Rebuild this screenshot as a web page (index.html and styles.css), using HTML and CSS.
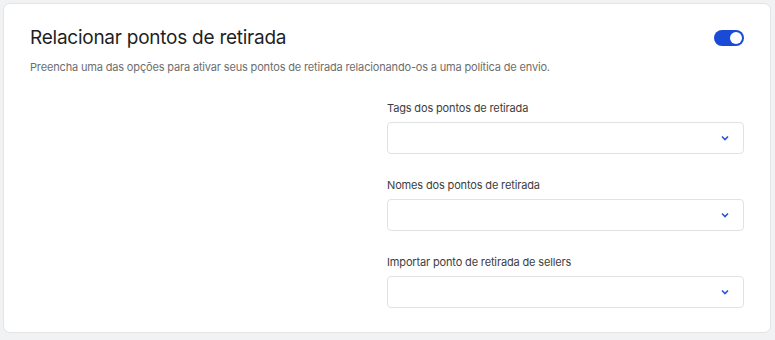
FILE: index.html
```html
<!DOCTYPE html>
<html lang="pt-BR">
<head>
<meta charset="utf-8">
<link rel="stylesheet" href="styles.css">
</head>
<body>
<section class="card">
  <header class="card-head">
    <h1 class="title">Relacionar pontos de retirada</h1>
    <button class="toggle" aria-pressed="true"><span class="knob"></span></button>
  </header>
  <p class="subtitle">Preencha uma das opções para ativar seus pontos de retirada relacionando-os a uma política de envio.</p>
  <div class="grid">
    <div></div>
    <div class="fields">
      <div class="field">
        <label class="label">Tags dos pontos de retirada</label>
        <div class="select"><svg class="chev" width="8" height="6" viewBox="0 0 8 6"><path d="M1 1.5 L4 4.5 L7 1.5" fill="none" stroke="#2953da" stroke-width="1.6"/></svg></div>
      </div>
      <div class="field">
        <label class="label">Nomes dos pontos de retirada</label>
        <div class="select"><svg class="chev" width="8" height="6" viewBox="0 0 8 6"><path d="M1 1.5 L4 4.5 L7 1.5" fill="none" stroke="#2953da" stroke-width="1.6"/></svg></div>
      </div>
      <div class="field">
        <label class="label">Importar ponto de retirada de sellers</label>
        <div class="select"><svg class="chev" width="8" height="6" viewBox="0 0 8 6"><path d="M1 1.5 L4 4.5 L7 1.5" fill="none" stroke="#2953da" stroke-width="1.6"/></svg></div>
      </div>
    </div>
  </div>
</section>
</body>
</html>
```
FILE: styles.css
```css
* { box-sizing: border-box; }
html, body { margin: 0; padding: 0; }
body {
  background: #f1f2f4;
  font-family: "Inter", "Noto Sans", sans-serif;
  padding: 3px 4px 7px 3px;
}
.card {
  background: #fff;
  border: 1px solid #e3e4e6;
  border-radius: 7px;
  height: 330px;
  padding: 20px 26px 24px 26px;
}
.card-head {
  display: flex;
  justify-content: space-between;
  align-items: center;
  height: 28px;
}
.title {
  margin: 0;
  font-size: 19px;
  font-weight: 400;
  line-height: 28px;
  color: #1f1f1f;
  letter-spacing: -0.25px;
}
.toggle {
  width: 30px;
  height: 16px;
  border: none;
  border-radius: 8px;
  background: #1a4bd6;
  padding: 2px;
  display: flex;
  justify-content: flex-end;
  cursor: pointer;
}
.knob {
  width: 12px;
  height: 12px;
  border-radius: 50%;
  background: #fff;
}
.subtitle {
  margin: 7px 0 0 0;
  font-size: 11px;
  line-height: 16px;
  color: #6e6e6e;
  letter-spacing: -0.16px;
}
.grid {
  display: grid;
  grid-template-columns: 1fr 1fr;
  margin-top: 25px;
}
.fields {
  display: flex;
  flex-direction: column;
  gap: 23px;
}
.label {
  display: block;
  font-size: 11px;
  line-height: 16px;
  color: #3d3d3d;
  margin-bottom: 6px;
  letter-spacing: -0.15px;
}
.select {
  height: 32px;
  border: 1px solid #e1e2e4;
  border-radius: 4px;
  display: flex;
  align-items: center;
  justify-content: flex-end;
  padding-right: 14px;
}
.chev { display: block; }
```
